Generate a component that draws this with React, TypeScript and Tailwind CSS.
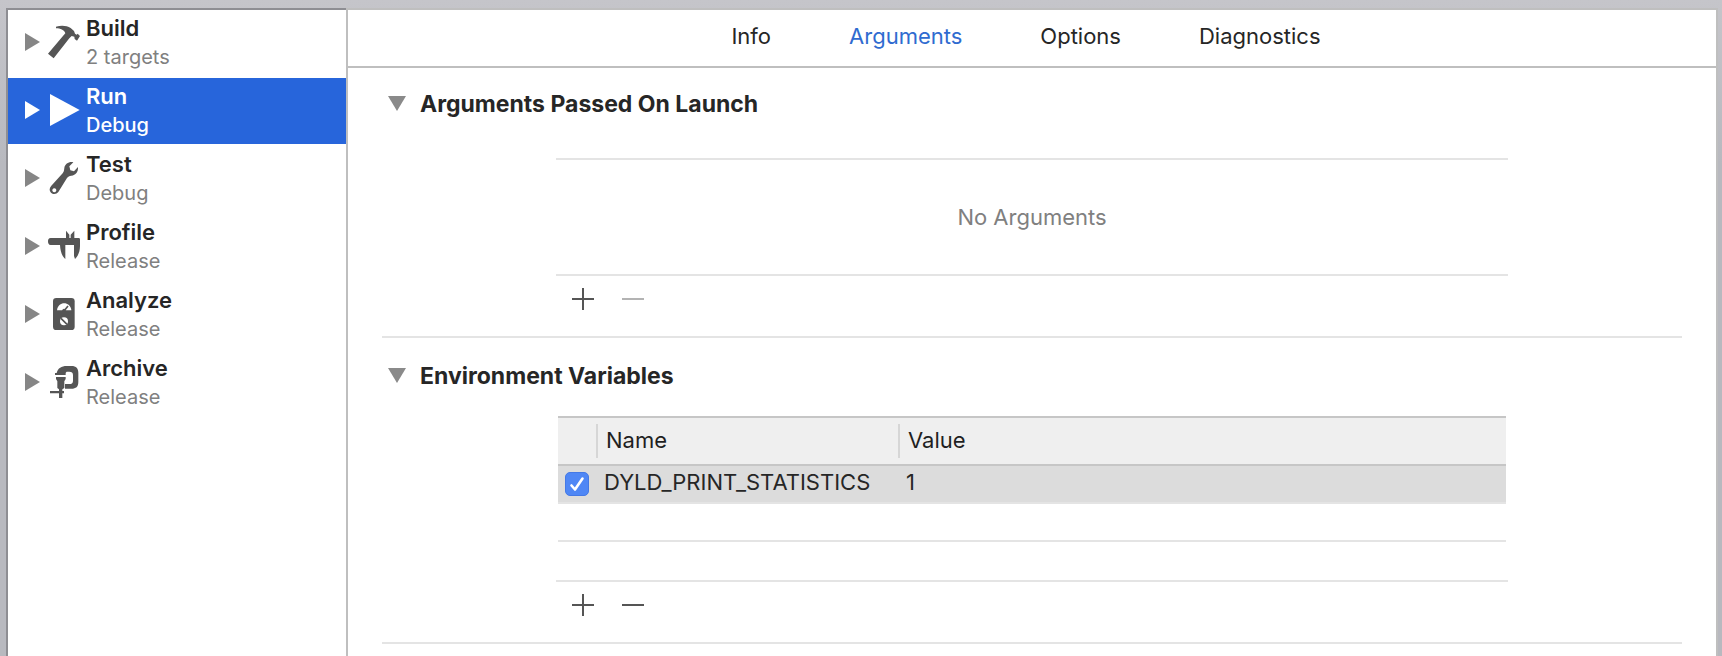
import React from "react";

type Scheme = {
  name: string;
  detail: string;
  selected?: boolean;
  icon: React.ReactNode;
};

const schemes: Scheme[] = [
  {
    name: "Build",
    detail: "2 targets",
    icon: (
      <path d="M30 8 C44 4 62 4 74 12 L84 21 L87 29 L92 32 L95 29 L102 36 L93 50 L86 45 L85 38 L77 36 L70 43 L23 103 L6 89 L49 38 L58 28 C55 18 43 13 30 13 Z" />
    ),
  },
  { name: "Run", detail: "Debug", selected: true, icon: <path d="M12 6 L101 54 L12 102 Z" /> },
  {
    name: "Test",
    detail: "Debug",
    icon: (
      <path
        fillRule="evenodd"
        d="M82 7 C70 4 57 11 55 24 C54 31 54 35 50 40 L16 77 C10 83 9 92 15 98 C21 104 32 103 37 96 L63 54 C66 50 70 48 76 47 C89 46 97 36 96 21 L84 34 L73 31 L70 19 Z M25 85 a6 6 0 1 1 -0.1 0 Z"
      />
    ),
  },
  {
    name: "Profile",
    detail: "Release",
    icon: (
      <path d="M14 30 H60 V8 L70 20 V30 H74 V20 L85 8 V30 H98 Q102 30 102 34 V54 C102 70 96 85 87 93 L84 84 V51 H58 V93 C48 85 43 70 42 51 H14 C8 51 6 46 6 40 C6 34 8 30 14 30 Z" />
    ),
  },
  {
    name: "Analyze",
    detail: "Release",
    icon: (
      <>
        <rect x="21" y="6" width="65" height="96" rx="10" />
        <path className="fill-white" d="M33 43 C36 15 73 15 76 43 Z" />
        <circle className="fill-white" cx="54" cy="76" r="12" />
        <path className="fill-none stroke-[#555]" strokeWidth="5" d="M54 45 L66 30 M45 67 L63 85" />
        <circle cx="54" cy="43" r="5" />
      </>
    ),
  },
  {
    name: "Archive",
    detail: "Release",
    icon: (
      <path d="M27 33 V27 H32 C36 12 46 6 62 6 H76 C91 6 97 13 97 27 V53 C97 68 90 74 76 74 H57 V60 H70 C78 60 81 57 81 50 V33 C81 26 77 23 70 23 H62 C60 24 59 26 59 28 V33 Z M30 39 H59 V45 L55 52 V72 L49 76 V81 H54 V88 H49 V102 H39 V88 H12 V81 H39 V76 L34 72 V52 L30 45 Z" />
    ),
  },
];

const tabs = ["Info", "Arguments", "Options", "Diagnostics"];

function SchemeRow({ scheme }: { scheme: Scheme }) {
  const on = scheme.selected;
  return (
    <li>
      <button
        type="button"
        aria-current={on ? "true" : undefined}
        className={
          on
            ? "flex h-[66px] w-full items-center bg-[#2765db] pb-[2px] pl-[17px] text-left text-white"
            : "flex h-[66px] w-full items-center pb-[2px] pl-[17px] text-left text-[#262626]"
        }
      >
        <svg viewBox="0 0 15 18" className={on ? "h-[18px] w-[15px] fill-white" : "h-[18px] w-[15px] fill-[#868686]"}>
          <path d="M0 0 L15 9 L0 18 Z" />
        </svg>
        <svg viewBox="0 0 108 108" className={on ? "ml-[6px] size-9 fill-white" : "ml-[6px] size-9 fill-[#555]"}>
          {scheme.icon}
        </svg>
        <span className="ml-1 flex flex-col pt-[2px]">
          <span className="text-[22px] leading-7 font-semibold">{scheme.name}</span>
          <span className={on ? "text-[20px] leading-[30px] font-medium" : "text-[20px] leading-[30px] text-[#808080]"}>
            {scheme.detail}
          </span>
        </span>
      </button>
    </li>
  );
}

function SectionTitle({ children }: { children: React.ReactNode }) {
  return (
    <h2>
      <button type="button" aria-expanded="true" className="flex items-center gap-[14px] pl-[6px] text-[23px] leading-7 font-bold text-[#262626]">
        <svg viewBox="0 0 18 15" className="mb-[2px] h-[15px] w-[18px] fill-[#8a8a8a]">
          <path d="M0 0 H18 L9 15 Z" />
        </svg>
        {children}
      </button>
    </h2>
  );
}

function AddRemove({ canRemove }: { canRemove: boolean }) {
  return (
    <div className="flex gap-7 pt-3 pl-4">
      <button type="button" aria-label="Add" className="text-[#555]">
        <svg viewBox="0 0 22 22" className="size-[22px] fill-current">
          <path d="M0 10 H10 V0 H12 V10 H22 V12 H12 V22 H10 V12 H0 Z" />
        </svg>
      </button>
      <button type="button" aria-label="Remove" disabled={!canRemove} className="text-[#555] disabled:text-[#b3b3b3]">
        <svg viewBox="0 0 22 22" className="size-[22px] fill-current">
          <path d="M0 10 H22 V12 H0 Z" />
        </svg>
      </button>
    </div>
  );
}

export default function App() {
  return (
    <div className="flex min-h-screen bg-linear-to-b from-[#c5c5ca] to-[#b8b9bf] to-25% pt-2 pr-1 pl-[6px] font-['Inter',sans-serif] text-[22px] leading-7">
      <nav className="w-[340px] shrink-0 border-t-2 border-l-2 border-[#8e8e93] bg-white">
        <ul className="flex flex-col gap-[2px]">
          {schemes.map((s) => (
            <SchemeRow key={s.name} scheme={s} />
          ))}
        </ul>
      </nav>
      <main className="min-w-0 grow border-2 border-b-0 border-[#bfbfbf] bg-white">
        <div role="tablist" className="flex h-[58px] items-start justify-center gap-[78px] border-b-2 border-[#bfbfbf] pt-3 pr-3">
          {tabs.map((t) => (
            <button
              key={t}
              type="button"
              role="tab"
              aria-selected={t === "Arguments"}
              className={t === "Arguments" ? "text-[#2f6bd0]" : "text-[#262626]"}
            >
              {t}
            </button>
          ))}
        </div>
        <div className="px-[34px]">
          <section className="border-b-2 border-[#e4e4e4] pt-[22px] pb-[26px]">
            <SectionTitle>Arguments Passed On Launch</SectionTitle>
            <div className="mx-[174px] mt-10">
              <p className="flex h-[118px] items-center justify-center border-y-2 border-[#e4e4e4] text-[#808080]">
                No Arguments
              </p>
              <AddRemove canRemove={false} />
            </div>
          </section>
          <section className="border-b-2 border-[#e4e4e4] pt-6 pb-[26px]">
            <SectionTitle>Environment Variables</SectionTitle>
            <div className="mx-[174px] mt-[26px]">
              <div className="border-b-2 border-[#e4e4e4] px-[2px] pb-[38px]">
                <table className="w-full table-fixed border-collapse text-left">
                  <colgroup>
                    <col className="w-[38px]" />
                    <col className="w-[302px]" />
                    <col />
                  </colgroup>
                  <thead>
                    <tr className="h-12 border-y-2 border-[#c6c6c6] bg-[#efefef] text-[#1f1f1f]">
                      <th aria-label="Enabled" className="p-0" />
                      <th className="p-0 font-normal">
                        <div className="flex h-[34px] items-center border-l-2 border-[#d6d6d6] pb-[2px] pl-2">Name</div>
                      </th>
                      <th className="p-0 font-normal">
                        <div className="flex h-[34px] items-center border-l-2 border-[#d6d6d6] pb-[2px] pl-2">Value</div>
                      </th>
                    </tr>
                  </thead>
                  <tbody>
                    <tr className="h-[38px] border-b-2 border-[#e4e4e4] bg-[#dcdcdc] text-[#262626]">
                      <td className="p-0">
                        <label className="relative ml-[7px] block size-6">
                          <input
                            type="checkbox"
                            defaultChecked
                            aria-label="Enable DYLD_PRINT_STATISTICS"
                            className="peer block size-6 appearance-none rounded-[5px] border border-[#b5b5b5] bg-white checked:border-[#4479e6] checked:bg-[#4f87f5]"
                          />
                          <svg
                            viewBox="0 0 24 24"
                            className="pointer-events-none absolute inset-0 hidden size-6 fill-none stroke-white peer-checked:block"
                            strokeWidth="2.6"
                            strokeLinecap="round"
                            strokeLinejoin="round"
                          >
                            <path d="M6.5 13.5 L10 17.5 L17.5 6.5" />
                          </svg>
                        </label>
                      </td>
                      <td className="p-0 pb-1 pl-2">DYLD_PRINT_STATISTICS</td>
                      <td className="p-0 pb-1 pl-2">1</td>
                    </tr>
                    <tr className="h-[38px] border-b-2 border-[#e4e4e4]">
                      <td className="p-0" colSpan={3} />
                    </tr>
                  </tbody>
                </table>
              </div>
              <AddRemove canRemove />
            </div>
          </section>
        </div>
      </main>
    </div>
  );
}
